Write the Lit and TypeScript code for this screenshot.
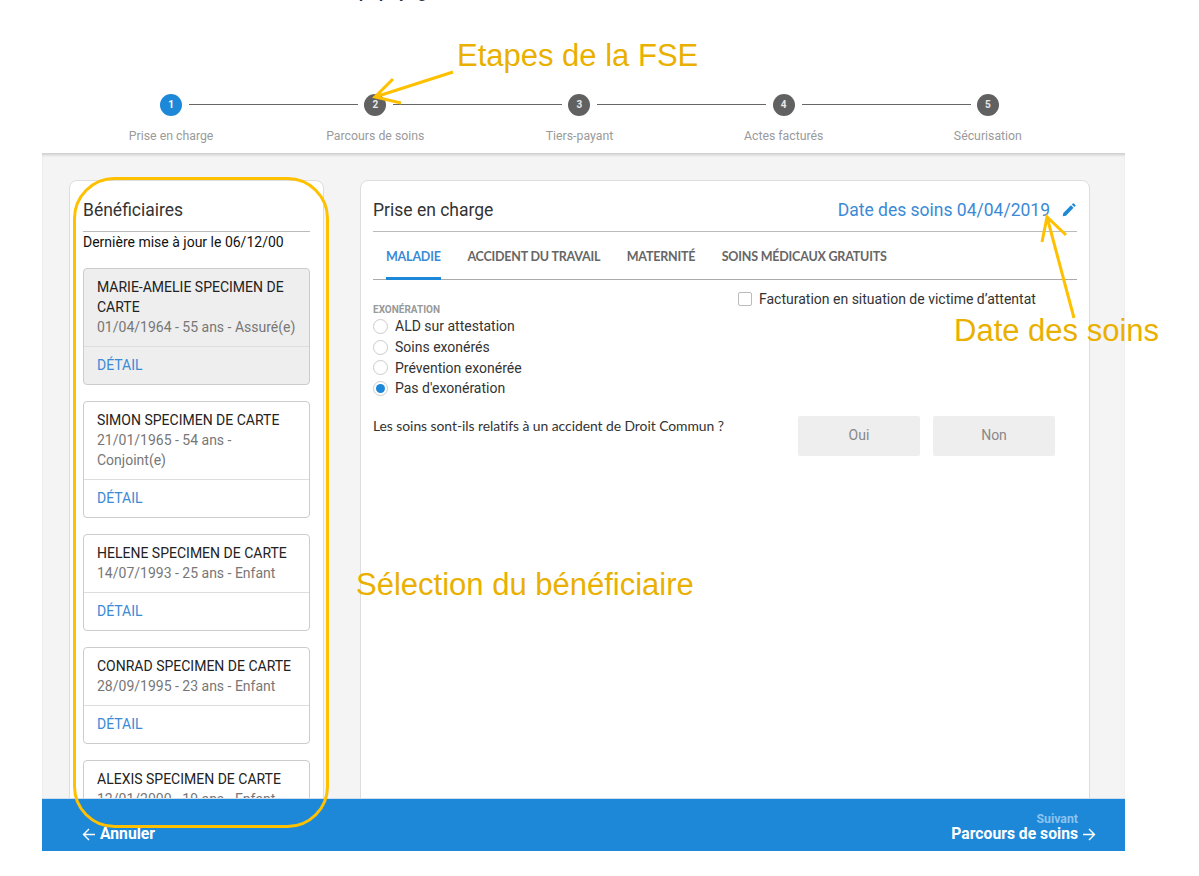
import { LitElement, html, css, svg } from "lit";
import { customElement } from "lit/decorators.js";

const steps = ["Prise en charge", "Parcours de soins", "Tiers-payant", "Actes facturés", "Sécurisation"];
const people = [
  { name: "MARIE-AMELIE SPECIMEN DE CARTE", info: "01/04/1964 - 55 ans - Assuré(e)", sel: true },
  { name: "SIMON SPECIMEN DE CARTE", info: "21/01/1965 - 54 ans - Conjoint(e)" },
  { name: "HELENE SPECIMEN DE CARTE", info: "14/07/1993 - 25 ans - Enfant" },
  { name: "CONRAD SPECIMEN DE CARTE", info: "28/09/1995 - 23 ans - Enfant" },
  { name: "ALEXIS SPECIMEN DE CARTE", info: "12/01/2000 - 19 ans - Enfant" },
];
const tabs = ["MALADIE", "ACCIDENT DU TRAVAIL", "MATERNITÉ", "SOINS MÉDICAUX GRATUITS"];
const radios = ["ALD sur attestation", "Soins exonérés", "Prévention exonérée", "Pas d'exonération"];

@customElement("app-root")
export class AppRoot extends LitElement {
  static styles = css`
    :host { display: block; position: relative; width: 1199px; height: 876px; overflow: hidden; background: #fff; font-family: Roboto, sans-serif; color: #222; }
    .cut { position: absolute; z-index: 3; left: 359px; top: -17px; font: 700 16px Roboto, sans-serif; color: #333; letter-spacing: 11px; }
    .app { position: absolute; left: 42px; top: 0; width: 1083px; height: 851px; display: flex; flex-direction: column; }
    .head { height: 153px; flex: none; padding: 94px 35px 0 27px; box-sizing: border-box; display: grid; grid-template-columns: repeat(5, 1fr); background: #fff; }
    .step { display: flex; flex-direction: column; align-items: center; position: relative; }
    .dot { width: 22px; height: 22px; border-radius: 50%; background: #616161; color: #e8e8e8; font: 700 10px/21px Roboto, sans-serif; text-align: center; }
    .dot.on { background: #1e88d8; color: #fff; }
    .line { position: absolute; left: calc(50% + 18px); width: 169px; top: 10px; height: 1px; background: #666; }
    .lab { margin-top: 12px; font-size: 12.3px; line-height: 16px; color: #9a9a9a; }
    .body { flex: 1; min-height: 0; overflow: hidden; background: #f4f4f4; padding: 27px 35px 0 27px; display: flex; gap: 36px; box-shadow: inset 0 3px 3px -1px rgba(0,0,0,.16); }
    .card { background: #fff; border: 1px solid #ddd; border-radius: 8px; box-sizing: border-box; height: 700px; flex: none; }
    .left { width: 255px; padding: 0 13px; }
    .right { width: 730px; padding: 0 12px; }
    .title { height: 51px; box-sizing: border-box; border-bottom: 1px solid #bbb; font-size: 17.5px; display: flex; align-items: center; justify-content: space-between; color: #333; padding-top: 8px; }
    .update { font-size: 14px; line-height: 20px; color: #111; margin-bottom: 16px; }
    .date { display: flex; align-items: center; gap: 12px; color: #3b8ad6; }
    .date svg { display: block; margin-right: 1px; }
    .person { border: 1px solid #ccc; border-radius: 4px; margin-bottom: 16.2px; }
    .person.sel { background: #eee; }
    .pbody { padding: 9px 13px 8px; font-size: 14px; line-height: 19.9px; border-bottom: 1px solid #ddd; }
    .pname { color: #222; }
    .pinfo { color: #777; }
    .pfoot { height: 37px; padding-left: 13px; font-size: 14px; line-height: 36px; color: #3b8ad6; }
    .tabs { display: flex; border-bottom: 1px solid #aaa; height: 48px; box-sizing: border-box; padding-left: 13px; gap: 26.4px; }
    .tab { font: 700 12.5px/49px Lato, sans-serif; color: #666; height: 48px; box-sizing: border-box; letter-spacing: -0.2px; }
    .tab.on { color: #3b8ad6; border-bottom: 3px solid #1e88d8; width: 55px; }
    .form { position: relative; padding-top: 23px; }
    .ex { font: 700 10px/13px Roboto, sans-serif; color: #999; }
    .radio { display: flex; align-items: center; gap: 7px; height: 20.7px; font-size: 14px; color: #333; }
    .rc { width: 15px; height: 15px; box-sizing: border-box; border: 1px solid #ccc; border-radius: 50%; position: relative; flex: none; }
    .rc.on::after { content: ""; position: absolute; inset: 2px; border-radius: 50%; background: #1e88d8; }
    .check { position: absolute; top: 11px; left: 365px; display: flex; align-items: center; gap: 7px; font-size: 14px; line-height: 16px; color: #333; }
    .box { width: 12px; height: 12px; border: 1px solid #bbb; border-radius: 2px; }
    .q { display: flex; margin-top: 17px; }
    .qt { font: 13.9px/20px Lato, sans-serif; letter-spacing: -0.05px; color: #333; width: 425px; flex: none; }
    .btn { width: 122px; height: 40px; background: #eee; color: #888; font-size: 14px; line-height: 38px; text-align: center; border-radius: 2px; margin-right: 13px; }
    .foot { height: 53px; flex: none; background: #1e88d8; color: #fff; display: flex; justify-content: space-between; align-items: flex-end; padding: 0 29px 8px 40px; font-weight: 700; font-size: 15.7px; line-height: 18px; border-top: 1px solid #cde; box-sizing: border-box; position: relative; z-index: 1; }
    .fl, .fr { display: flex; align-items: center; gap: 4px; }
    .next { text-align: right; padding-right: 18px; font-size: 12.3px; line-height: 14px; color: #8cc4ee; margin-bottom: -1px; }
    .over { position: absolute; inset: 0; pointer-events: none; z-index: 5; }
    .note { font: 31px "Liberation Sans", Arial, sans-serif; fill: #e9b000; }
  `;

  private arrow(dir: "l" | "r") {
    const d = dir === "l" ? "M13 6.5H1.5M7 1l-5.5 5.5L7 12" : "M1 6.5h11.5M7 1l5.5 5.5L7 12";
    return html`<svg width="14" height="13" viewBox="0 0 14 13" fill="none" stroke="#fff" stroke-width="1.4"><path d=${d}></path></svg>`;
  }

  render() {
    return html`
      <div class="cut">ppyg</div>
      <div class="app">
        <div class="head">
          ${steps.map((s, i) => html`<div class="step">
            <div class="dot ${i === 0 ? "on" : ""}">${i + 1}</div>
            ${i < 4 ? html`<div class="line"></div>` : ""}
            <div class="lab">${s}</div>
          </div>`)}
        </div>
        <div class="body">
          <div class="card left">
            <div class="title">Bénéficiaires</div>
            <div class="update">Dernière mise à jour le 06/12/00</div>
            ${people.map((p) => html`<div class="person ${p.sel ? "sel" : ""}">
              <div class="pbody"><div class="pname">${p.name}</div><div class="pinfo">${p.info}</div></div>
              <div class="pfoot">DÉTAIL</div>
            </div>`)}
          </div>
          <div class="card right">
            <div class="title">
              <span>Prise en charge</span>
              <span class="date">Date des soins 04/04/2019
                <svg width="14" height="14" viewBox="2 2 21 21" fill="#1e88d8"><path d="M3 22l1-5L15.5 5.5l3.8 3.8L8 21z"></path><path d="M16.8 4.2l1.4-1.4a1.2 1.2 0 0 1 1.7 0l2.1 2.1a1.2 1.2 0 0 1 0 1.7L20.6 8z"></path></svg>
              </span>
            </div>
            <div class="tabs">${tabs.map((t, i) => html`<div class="tab ${i === 0 ? "on" : ""}">${t}</div>`)}</div>
            <div class="form">
              <div class="check"><div class="box"></div>Facturation en situation de victime d’attentat</div>
              <div class="ex">EXONÉRATION</div>
              ${radios.map((r, i) => html`<div class="radio"><div class="rc ${i === 3 ? "on" : ""}"></div>${r}</div>`)}
              <div class="q">
                <div class="qt">Les soins sont-ils relatifs à un accident de Droit Commun ?</div>
                <div class="btn">Oui</div><div class="btn">Non</div>
              </div>
            </div>
          </div>
        </div>
        <div class="foot">
          <div class="fl">${this.arrow("l")}Annuler</div>
          <div>
            <div class="next">Suivant</div>
            <div class="fr">Parcours de soins ${this.arrow("r")}</div>
          </div>
        </div>
      </div>
      <svg class="over" width="1199" height="876" viewBox="0 0 1199 876" fill="none" stroke="#ffc000" stroke-width="3">
        ${svg`
          <rect x="74.5" y="178.5" width="253" height="648" rx="40" ry="40"></rect>
          <path d="M453 72L375 97M393 79L375 97L401 103"></path>
          <path d="M1074 318L1047 217M1042 242L1047 217L1066 235"></path>
          <text class="note" x="457" y="66" stroke="none">Etapes de la FSE</text>
          <text class="note" x="954" y="341" stroke="none">Date des soins</text>
          <text class="note" x="356" y="595" stroke="none">Sélection du bénéficiaire</text>
        `}
      </svg>
    `;
  }
}
